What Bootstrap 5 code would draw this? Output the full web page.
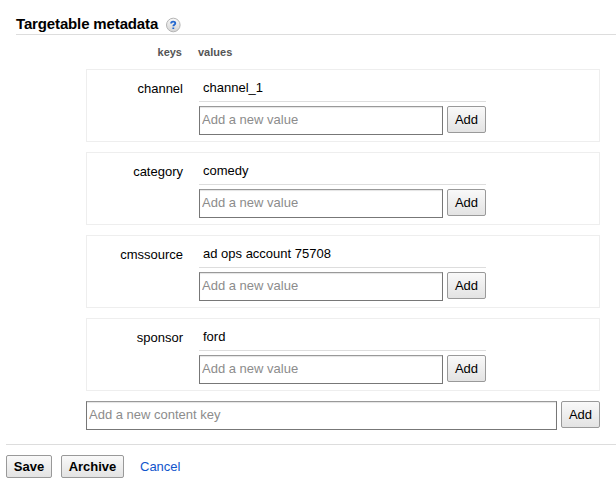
<!DOCTYPE html>
<html lang="en">
<head>
<meta charset="utf-8">
<title>Targetable metadata</title>
<link href="https://cdn.jsdelivr.net/npm/bootstrap@5.3.0/dist/css/bootstrap.min.css" rel="stylesheet">
<style>
body { font: 13px/16px "Liberation Sans", Arial, sans-serif; color: #000; background: #fff; overflow: hidden; }
.page-form { width: 616px; height: 487px; padding-top: 14px; }
.section-head { margin-left: 16px; height: 21px; border-bottom: 1px solid #ddd; }
.section-title { font-size: 15px; line-height: 20px; font-weight: bold; letter-spacing: -.14px; }
.help-icon { margin: 3px 0 0 7px; }
.col-heads { margin-left: 86px; height: 34px; padding-top: 10px; font-size: 11px; line-height: 14px; font-weight: bold; color: #555; }
.key-name { width: 97px; }
.col-heads .key-name { width: 96px; }
.col-heads .value-head { margin-left: 16px; }
.meta-list { margin-left: 86px; width: 514px; }
.meta-list > * + * { margin-top: 10px; }
.meta-row { height: 73px; border: 1px solid #eee; }
.meta-row .key-name { width: 96px; padding-top: 11px; }
.meta-values { width: 287px; margin-left: 16px; }
.meta-value { height: 32px; padding: 10px 0 0 4px; border-bottom: 1px solid #ddd; margin-bottom: 4px; }
.entry { gap: 4px; }
.entry .form-control { height: 29px; min-height: 0; padding: 0 2px 3px; font-size: 13px; line-height: 16px; border: 1px solid #777; border-top-color: #999; border-radius: 0; box-shadow: inset 0 1px 1px #e4e4e4; }
.entry .form-control::placeholder { color: #8c8c8c; }
.btn.tool-btn { padding: 0; font-size: 13px; line-height: 16px; color: #000; border: 1px solid #999; border-radius: 2px; background: linear-gradient(#f9f9f9, #e3e3e3); }
.entry .tool-btn { width: 39px; height: 27px; flex: none; }
.form-actions { margin: 14px 0 0 6px; border-top: 1px solid #ddd; padding-top: 10px; }
.form-actions .tool-btn { height: 23px; font-weight: bold; }
.save-btn { width: 46px; }
.archive-btn { width: 63px; margin-left: 9px; }
.cancel-link { margin-left: 16px; color: #15c; }
</style>
<script src="https://cdn.jsdelivr.net/npm/bootstrap@5.3.0/dist/js/bootstrap.bundle.min.js"></script>
</head>
<body>
<form class="page-form">
  <div class="section-head d-flex">
    <h1 class="section-title m-0">Targetable metadata</h1>
    <svg class="help-icon" width="16" height="16" viewBox="0 0 16 16" aria-label="Help">
      <defs><linearGradient id="helpFill" x1="0" y1="0" x2="0" y2="1"><stop offset="0" stop-color="#f8f8f8"/><stop offset="1" stop-color="#d4d4d4"/></linearGradient></defs>
      <circle cx="8.3" cy="8" r="6.8" fill="url(#helpFill)" stroke="#b5b5b5"/>
      <path d="M6.1 6.4C6.1 4.1 10.3 4 10.3 6.2C10.3 7.7 8.3 7.7 8.3 9.3M8.3 10.5V12" fill="none" stroke="#2468d0" stroke-width="1.8"/>
    </svg>
  </div>
  <div class="col-heads d-flex">
    <div class="key-name text-end">keys</div>
    <div class="value-head">values</div>
  </div>
  <div class="meta-list">
    <div class="meta-row d-flex">
      <div class="key-name text-end">channel</div>
      <div class="meta-values">
        <div class="meta-value">channel_1</div>
        <div class="entry d-flex align-items-start"><input class="form-control" placeholder="Add a new value"><button type="button" class="btn tool-btn">Add</button></div>
      </div>
    </div>
    <div class="meta-row d-flex">
      <div class="key-name text-end">category</div>
      <div class="meta-values">
        <div class="meta-value">comedy</div>
        <div class="entry d-flex align-items-start"><input class="form-control" placeholder="Add a new value"><button type="button" class="btn tool-btn">Add</button></div>
      </div>
    </div>
    <div class="meta-row d-flex">
      <div class="key-name text-end">cmssource</div>
      <div class="meta-values">
        <div class="meta-value">ad ops account 75708</div>
        <div class="entry d-flex align-items-start"><input class="form-control" placeholder="Add a new value"><button type="button" class="btn tool-btn">Add</button></div>
      </div>
    </div>
    <div class="meta-row d-flex">
      <div class="key-name text-end">sponsor</div>
      <div class="meta-values">
        <div class="meta-value">ford</div>
        <div class="entry d-flex align-items-start"><input class="form-control" placeholder="Add a new value"><button type="button" class="btn tool-btn">Add</button></div>
      </div>
    </div>
    <div class="entry d-flex align-items-start"><input class="form-control" placeholder="Add a new content key"><button type="button" class="btn tool-btn">Add</button></div>
  </div>
  <div class="form-actions d-flex align-items-center">
    <button type="button" class="btn tool-btn save-btn">Save</button>
    <button type="button" class="btn tool-btn archive-btn">Archive</button>
    <a href="#" class="cancel-link text-decoration-none">Cancel</a>
  </div>
</form>
</body>
</html>
